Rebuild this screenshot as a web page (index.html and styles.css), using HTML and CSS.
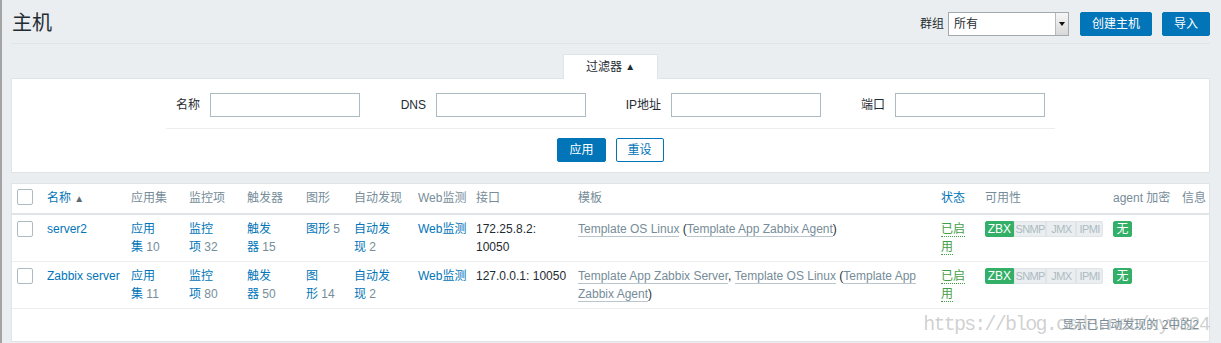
FILE: index.html
```html
<!DOCTYPE html>
<html lang="zh">
<head>
<meta charset="utf-8">
<title>主机</title>
<link rel="stylesheet" href="styles.css">
</head>
<body>
<div class="page">
  <header class="page-header">
    <h1 class="title">主机</h1>
    <div class="controls">
      <span class="ctl-label">群组</span>
      <div class="select">
        <span class="select-value">所有</span>
        <span class="select-arrow"><span class="tri"></span></span>
      </div>
      <button class="btn btn-create">创建主机</button>
      <button class="btn">导入</button>
    </div>
  </header>

  <div class="filter">
    <div class="filter-tabs"><div class="filter-tab">过滤器 <span class="tab-arrow">▲</span></div></div>
    <div class="filter-panel">
      <div class="filter-form">
        <label class="f-label w1">名称</label><input class="f-input" type="text">
        <label class="f-label w2">DNS</label><input class="f-input" type="text">
        <label class="f-label w3">IP地址</label><input class="f-input" type="text">
        <label class="f-label w4">端口</label><input class="f-input" type="text">
      </div>
      <div class="filter-buttons">
        <button class="btn">应用</button>
        <button class="btn btn-alt">重设</button>
      </div>
    </div>
  </div>

  <div class="list-panel">
    <table class="list">
      <thead>
        <tr>
          <th class="c-cb"><span class="cb"></span></th>
          <th class="c-name"><span class="sort">名称</span> <span class="sort-arrow">▲</span></th>
          <th class="c-app">应用集</th>
          <th class="c-item">监控项</th>
          <th class="c-trig">触发器</th>
          <th class="c-graph">图形</th>
          <th class="c-disc">自动发现</th>
          <th class="c-web">Web监测</th>
          <th class="c-iface">接口</th>
          <th class="c-tpl">模板</th>
          <th class="c-status"><span class="sort">状态</span></th>
          <th class="c-avail">可用性</th>
          <th class="c-enc">agent 加密</th>
          <th class="c-info">信息</th>
        </tr>
      </thead>
      <tbody>
        <tr>
          <td><span class="cb"></span></td>
          <td><a class="link" href="#">server2</a></td>
          <td><a class="link" href="#">应用集</a>&nbsp;<span class="cnt">10</span></td>
          <td><a class="link" href="#">监控项</a>&nbsp;<span class="cnt">32</span></td>
          <td><a class="link" href="#">触发器</a>&nbsp;<span class="cnt">15</span></td>
          <td><a class="link" href="#">图形</a>&nbsp;<span class="cnt">5</span></td>
          <td><a class="link" href="#">自动发现</a>&nbsp;<span class="cnt">2</span></td>
          <td><a class="link nowrap" href="#">Web监测</a></td>
          <td>172.25.8.2: 10050</td>
          <td><a class="tpl" href="#">Template OS Linux</a> (<a class="tpl" href="#">Template App Zabbix Agent</a>)</td>
          <td><a class="status" href="#">已启用</a></td>
          <td><div class="avail"><span class="st st-on w-zbx">ZBX</span><span class="st st-off w-snmp">SNMP</span><span class="st st-off w-jmx">JMX</span><span class="st st-off w-ipmi">IPMI</span></div></td>
          <td><span class="st st-on w-none">无</span></td>
          <td></td>
        </tr>
        <tr>
          <td><span class="cb"></span></td>
          <td><a class="link" href="#">Zabbix server</a></td>
          <td><a class="link" href="#">应用集</a>&nbsp;<span class="cnt">11</span></td>
          <td><a class="link" href="#">监控项</a>&nbsp;<span class="cnt">80</span></td>
          <td><a class="link" href="#">触发器</a>&nbsp;<span class="cnt">50</span></td>
          <td><a class="link" href="#">图形</a>&nbsp;<span class="cnt">14</span></td>
          <td><a class="link" href="#">自动发现</a>&nbsp;<span class="cnt">2</span></td>
          <td><a class="link nowrap" href="#">Web监测</a></td>
          <td>127.0.0.1: 10050</td>
          <td><a class="tpl" href="#">Template App Zabbix Server</a>, <a class="tpl" href="#">Template OS Linux</a> (<a class="tpl" href="#">Template App Zabbix Agent</a>)</td>
          <td><a class="status" href="#">已启用</a></td>
          <td><div class="avail"><span class="st st-on w-zbx">ZBX</span><span class="st st-off w-snmp">SNMP</span><span class="st st-off w-jmx">JMX</span><span class="st st-off w-ipmi">IPMI</span></div></td>
          <td><span class="st st-on w-none">无</span></td>
          <td></td>
        </tr>
      </tbody>
    </table>
    <div class="list-footer">显示已自动发现的 2中的2</div>
    <div class="watermark">https://blog.csdn.net/xy0324</div>
  </div>
</div>
</body>
</html>
```

FILE: styles.css
```css
html, body {
  height: 100%;
}
body {
  margin: 0;
  box-sizing: border-box;
  min-height: 100%;
  background: #ebeef0;
  border-left: 2px solid #a4a4a4;
  font-family: "Liberation Sans", "Noto Sans CJK SC", sans-serif;
  font-size: 12px;
  line-height: 18px;
  color: #1f2c33;
}
.page {
  padding: 0 11px 0 9px;
}

/* header */
.page-header {
  display: flex;
  align-items: center;
  justify-content: space-between;
  padding: 12px 0 7px;
  border-bottom: 1px solid #dfe4e7;
}
.title {
  margin: -3px 0 0 1px;
  font-size: 20px;
  font-weight: normal;
  line-height: 24px;
  color: #1f2c33;
}
.controls {
  display: flex;
  align-items: center;
}
.ctl-label {
  margin-right: 4px;
}
.select {
  display: flex;
  box-sizing: border-box;
  width: 121px;
  height: 24px;
  margin-right: 11px;
  border: 1px solid #a2aab0;
  background: #fff;
}
.select-value {
  flex: 1;
  padding-left: 5px;
  line-height: 22px;
}
.select-arrow {
  display: flex;
  align-items: center;
  justify-content: center;
  width: 12px;
  border-left: 1px solid #b9b9b9;
  background: linear-gradient(#f6f6f6, #d8d8d8);
}
.tri {
  width: 0;
  height: 0;
  border-top: 4px solid #111;
  border-left: 3px solid transparent;
  border-right: 3px solid transparent;
}
.btn {
  box-sizing: border-box;
  height: 24px;
  padding: 0 11px;
  margin: 0;
  border: 1px solid #0275b8;
  border-radius: 2px;
  background: #0275b8;
  color: #fff;
  font-family: inherit;
  font-size: 12px;
  line-height: 22px;
  cursor: pointer;
}
.btn-create {
  margin-right: 10px;
}
.btn-alt {
  background: #fff;
  color: #0275b8;
}

/* filter */
.filter {
  margin-top: 10px;
}
.filter-tabs {
  display: flex;
  justify-content: center;
}
.filter-tab {
  position: relative;
  z-index: 1;
  height: 24px;
  margin-bottom: -1px;
  padding: 0 22px;
  line-height: 24px;
  background: #fff;
  border: 1px solid #dfe4e7;
  border-bottom: none;
}
.tab-arrow {
  font-size: 10px;
  vertical-align: 1px;
}
.filter-panel {
  background: #fff;
  border: 1px solid #dfe4e7;
  padding: 14px 0 10px;
}
.filter-form {
  display: flex;
  box-sizing: border-box;
  width: 889px;
  margin: 0 auto;
  padding: 0 10px 11px 0;
  border-bottom: 1px solid #ebeef0;
}
.f-label {
  box-sizing: border-box;
  padding-right: 10px;
  text-align: right;
  line-height: 24px;
}
.w1 { width: 44px; }
.w2 { width: 76px; }
.w3 { width: 85px; }
.w4 { width: 74px; }
.f-input {
  box-sizing: border-box;
  width: 150px;
  height: 24px;
  margin: 0;
  padding: 0 5px;
  border: 1px solid #acbbc2;
  background: #fff;
  font: inherit;
}
.filter-buttons {
  display: flex;
  justify-content: center;
  gap: 10px;
  margin-top: 9px;
}

/* list */
.list-panel {
  position: relative;
  margin-top: 10px;
  background: #fff;
  border: 1px solid #dfe4e7;
}
.list {
  width: 100%;
  border-collapse: collapse;
  table-layout: fixed;
}
.list th {
  box-sizing: border-box;
  padding: 5px;
  text-align: left;
  font-weight: normal;
  color: #768d99;
  white-space: nowrap;
  vertical-align: top;
  border-bottom: 2px solid #dfe4e7;
}
.list td {
  padding: 5px;
  vertical-align: top;
  border-bottom: 1px solid #ebeef0;
  word-wrap: break-word;
}
.c-cb { width: 30px; }
.c-name { width: 84px; }
.c-app { width: 58px; }
.c-item { width: 58px; }
.c-trig { width: 59px; }
.c-graph { width: 48px; }
.c-disc { width: 64px; }
.c-web { width: 58px; }
.c-iface { width: 102px; }
.c-tpl { width: 363px; }
.c-status { width: 44px; }
.c-avail { width: 128px; }
.c-enc { width: 69px; }
.c-info { width: 33px; }

.cb {
  display: block;
  box-sizing: border-box;
  width: 16px;
  height: 16px;
  border: 1px solid #acbbc2;
  border-radius: 2px;
  background: #fff;
}
td .cb {
  margin-top: 1px;
}
.sort {
  color: #0275b8;
}
.sort-arrow {
  font-size: 10px;
  color: #5b6c75;
}
.link {
  color: #0275b8;
  text-decoration: none;
}
.nowrap {
  white-space: nowrap;
}
.cnt {
  color: #768d99;
}
.tpl {
  color: #768d99;
  text-decoration: none;
  border-bottom: 1px solid rgba(118, 141, 153, 0.5);
}
.status {
  color: #429e47;
  text-decoration: none;
  border-bottom: 1px dotted #429e47;
}
.avail {
  display: flex;
  margin-top: 1px;
}
.st {
  display: inline-block;
  box-sizing: border-box;
  height: 16px;
  border: 1px solid;
  border-radius: 2px;
  text-align: center;
  line-height: 14px;
  vertical-align: top;
}
.st-on {
  background: #34af67;
  border-color: #34af67;
  color: #fff;
  font-size: 12px;
}
.st-off {
  background: #ebeef0;
  border-color: #dfe4e7;
  color: #acbbc2;
  font-size: 11px;
  letter-spacing: -0.6px;
}
.avail .st {
  border-radius: 0;
}
.avail .st:first-child {
  border-radius: 2px 0 0 2px;
}
.avail .st:last-child {
  border-radius: 0 2px 2px 0;
}
.w-zbx { width: 29px; }
.w-snmp { width: 33px; }
.w-jmx { width: 30px; }
.w-ipmi { width: 27px; }
.w-none {
  width: 19px;
  margin-top: 1px;
}
.list-footer {
  padding: 7px 10px;
  text-align: right;
  color: #768d99;
}
.watermark {
  position: absolute;
  right: 0;
  bottom: 4px;
  font-family: "Liberation Mono", monospace;
  font-size: 20px;
  line-height: 24px;
  letter-spacing: -1.8px;
  color: rgba(150, 150, 150, 0.45);
  white-space: nowrap;
  pointer-events: none;
}
```
